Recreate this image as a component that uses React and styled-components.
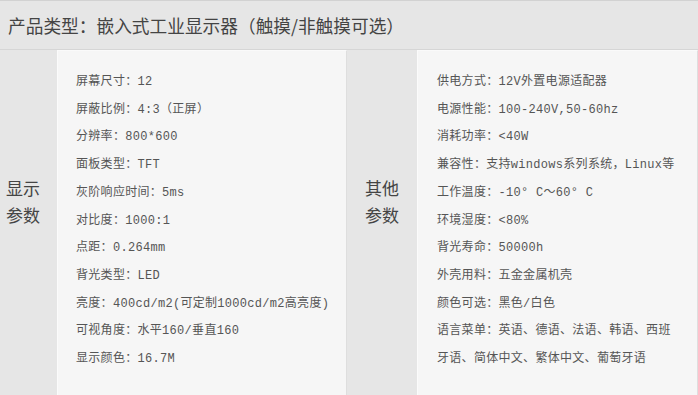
import React from "react";
import styled, { createGlobalStyle } from "styled-components";

const GlobalStyle = createGlobalStyle`
  html, body {
    margin: 0;
    padding: 0;
    background: #f5f5f5;
  }
`;

const displaySpecs = [
  "屏幕尺寸：12",
  "屏蔽比例：4:3（正屏）",
  "分辨率：800*600",
  "面板类型：TFT",
  "灰阶响应时间：5ms",
  "对比度：1000:1",
  "点距：0.264mm",
  "背光类型：LED",
  "亮度：400cd/m2(可定制1000cd/m2高亮度)",
  "可视角度：水平160/垂直160",
  "显示颜色：16.7M",
];

const otherSpecs = [
  "供电方式：12V外置电源适配器",
  "电源性能：100-240V,50-60hz",
  "消耗功率：<40W",
  "兼容性：支持windows系列系统，Linux等",
  "工作温度：-10° C～60° C",
  "环境湿度：<80%",
  "背光寿命：50000h",
  "外壳用料：五金金属机壳",
  "颜色可选：黑色/白色",
  "语言菜单：英语、德语、法语、韩语、西班",
  "牙语、简体中文、繁体中文、葡萄牙语",
];

const Page = styled.div`
  width: 698px;
  height: 395px;
  overflow: hidden;
  font-family: "Noto Sans CJK SC", "Noto Sans", sans-serif;
`;

const TitleBar = styled.div`
  height: 48px;
  display: flex;
  align-items: center;
  padding-left: 8px;
  background: #e6e6e6;
  border-top: 1px solid #d2d2d2;
  border-bottom: 1px solid #d6d6d6;
  color: #444;
  font-size: 17.7px;
`;

const SpecGrid = styled.div`
  display: grid;
  grid-template-columns: 57px 290px 70px 1fr;
  height: 345px;
`;

const LabelCell = styled.div`
  display: flex;
  flex-direction: column;
  justify-content: center;
  align-items: ${(p) => (p.$left ? "flex-start" : "center")};
  padding: 0 0 44px ${(p) => (p.$left ? "6px" : "0")};
  background: #e6e6e6;
  color: #444;
  font-size: 17px;
  line-height: 27px;
`;

const ValueCell = styled.div`
  padding: 18px 0 0 ${(p) => p.$pad}px;
  background: #f6f6f6;
  border-left: 1px solid #fbfbfb;
  border-right: 1px solid #dedede;
  border-top: 1px solid #fafafa;
`;

const SpecLine = styled.div`
  font-family: "Liberation Mono", "Noto Sans CJK SC", monospace;
  font-size: 12px;
  letter-spacing: 0.3px;
  line-height: 27.7px;
  color: #555;
  white-space: nowrap;
`;

export default function App() {
  return (
    <Page>
      <GlobalStyle />
      <TitleBar>产品类型：嵌入式工业显示器（触摸/非触摸可选）</TitleBar>
      <SpecGrid>
        <LabelCell $left>
          <span>显示</span>
          <span>参数</span>
        </LabelCell>
        <ValueCell $pad={18}>
          {displaySpecs.map((s) => (
            <SpecLine key={s}>{s}</SpecLine>
          ))}
        </ValueCell>
        <LabelCell>
          <span>其他</span>
          <span>参数</span>
        </LabelCell>
        <ValueCell $pad={19}>
          {otherSpecs.map((s) => (
            <SpecLine key={s}>{s}</SpecLine>
          ))}
        </ValueCell>
      </SpecGrid>
    </Page>
  );
}
